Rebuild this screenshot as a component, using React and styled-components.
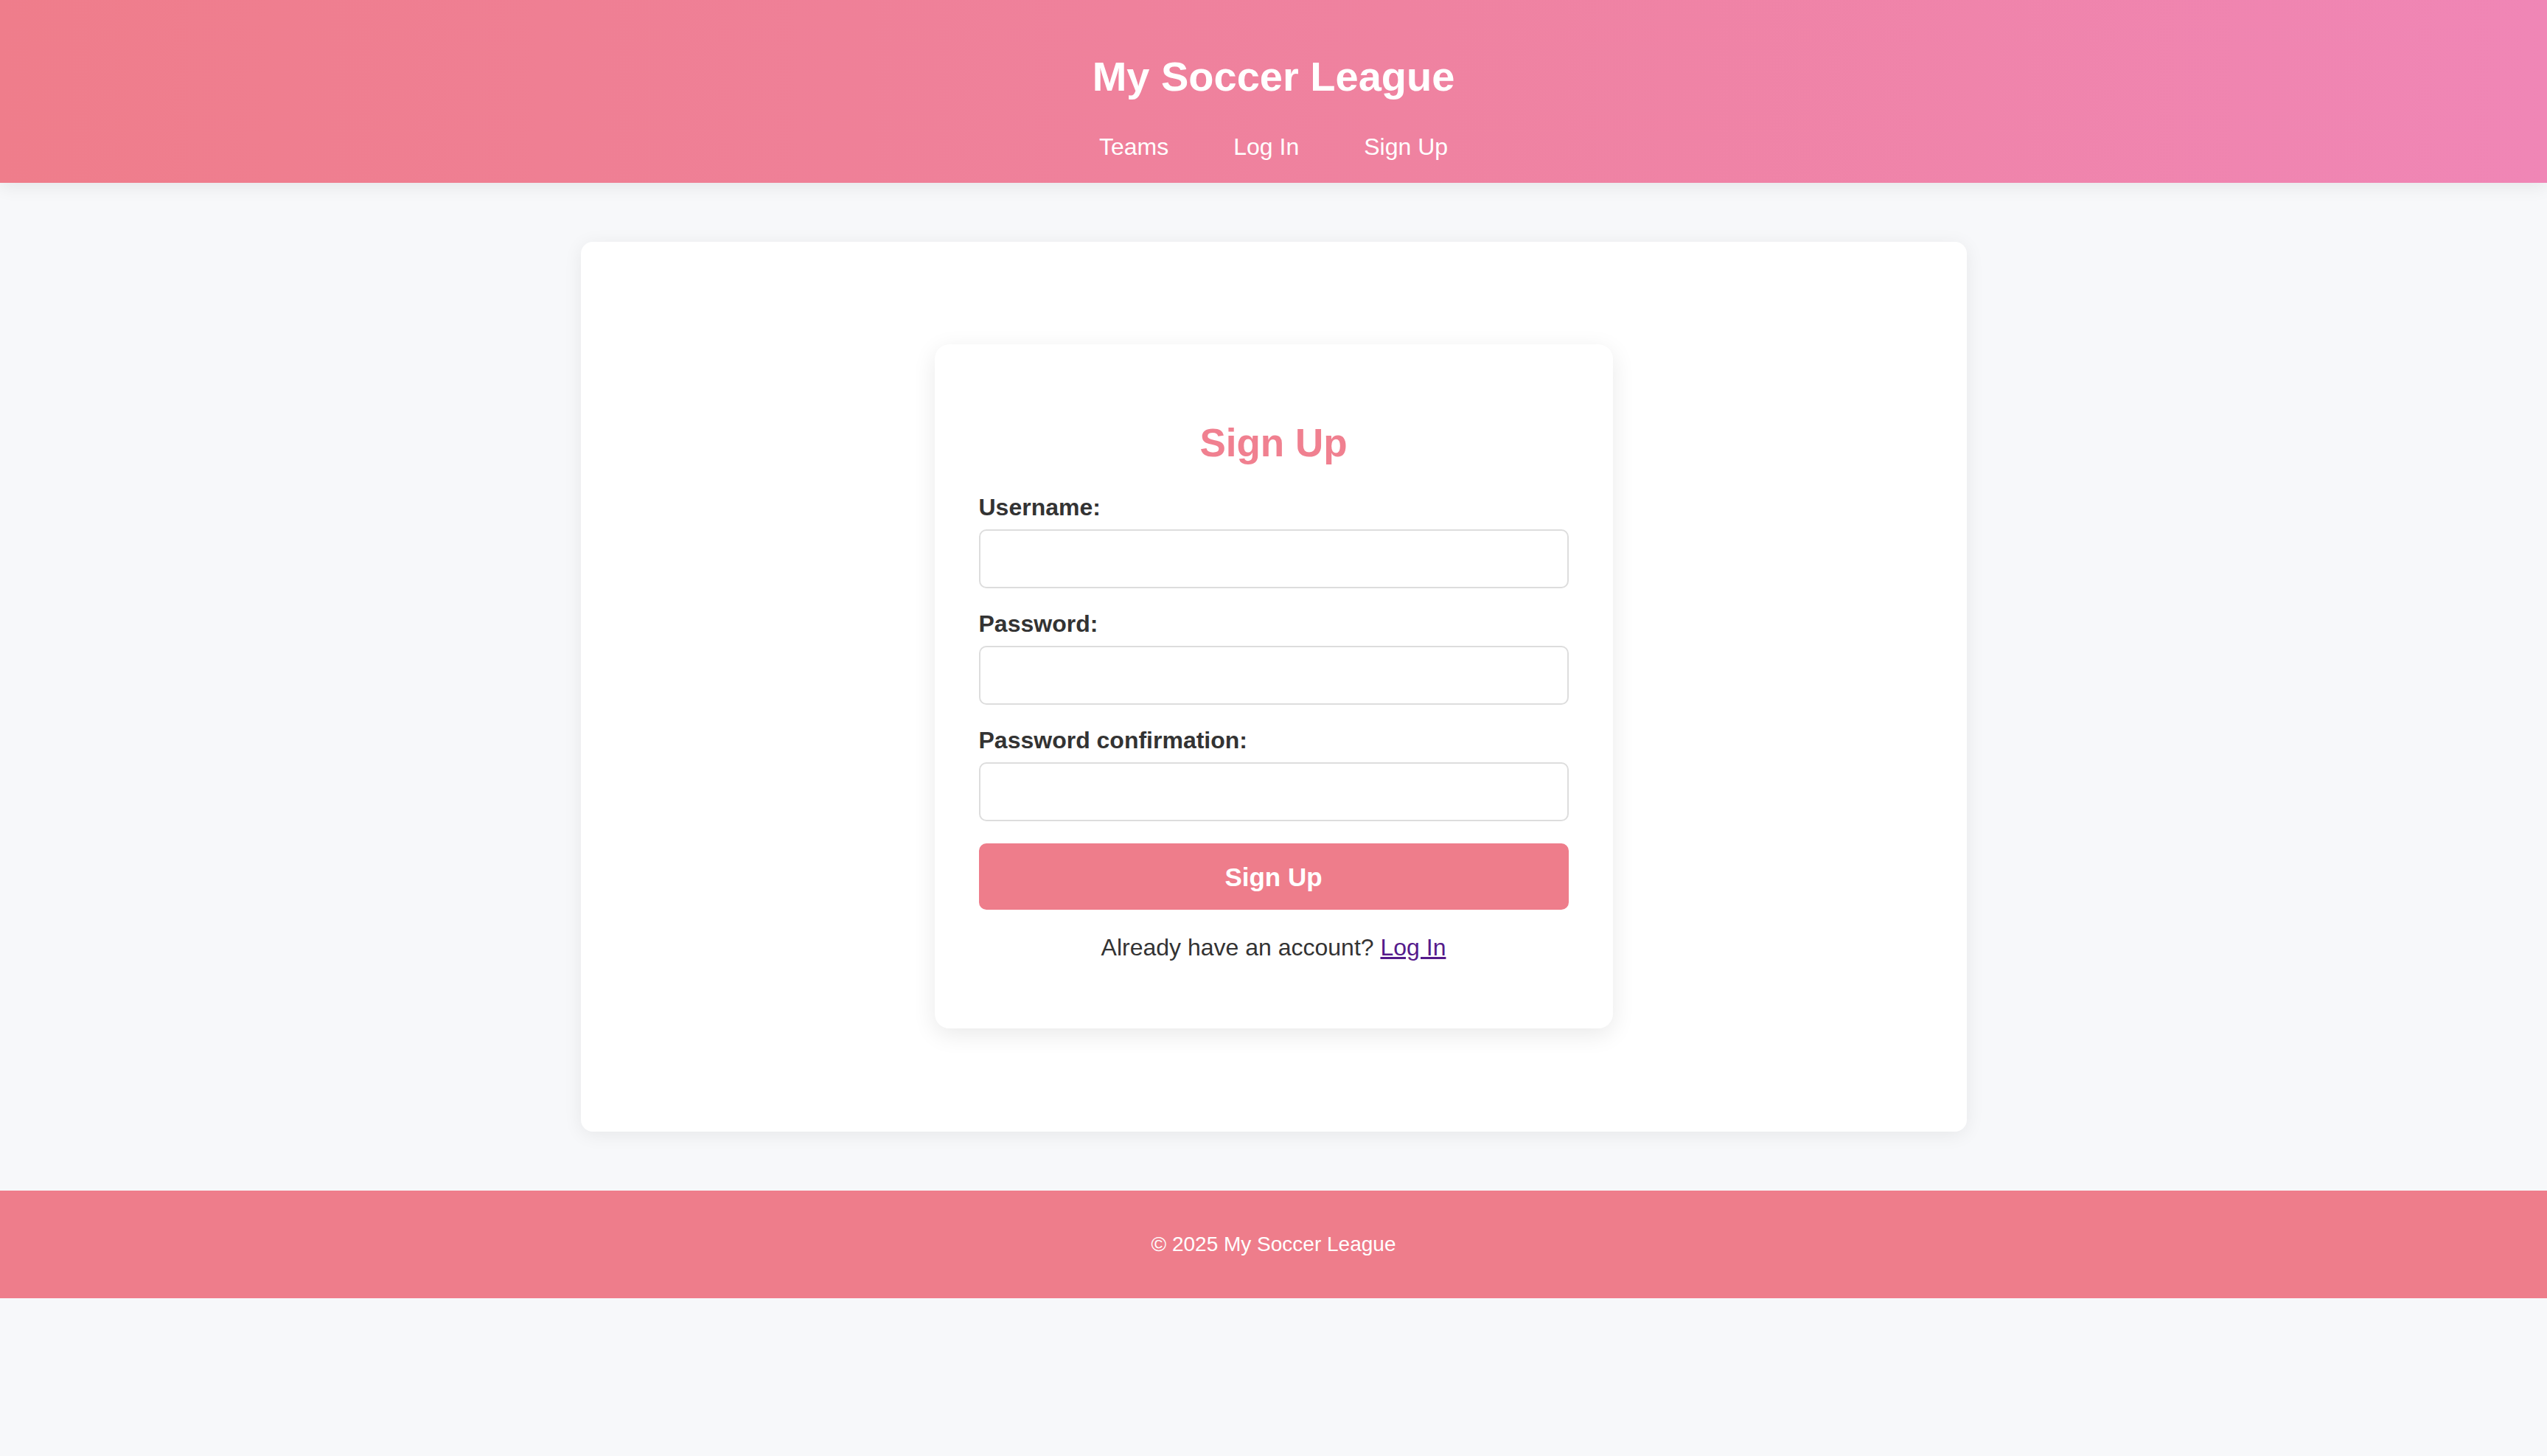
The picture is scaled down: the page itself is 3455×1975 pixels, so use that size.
import React from "react";
import styled, { createGlobalStyle } from "styled-components";

const GlobalStyle = createGlobalStyle`
  html, body {
    margin: 0;
    padding: 0;
    background: #f7f8fa;
    font-family: "Liberation Sans", Arial, Helvetica, sans-serif;
    color: #333333;
  }
  * { box-sizing: border-box; }
`;

const Header = styled.header`
  background: linear-gradient(90deg, #ef7d8b 0%, #ef82a0 55%, #f086b6 100%);
  padding: 72px 20px 31px;
  text-align: center;
  box-shadow: 0 6px 22px rgba(0, 0, 0, 0.07);
  position: relative;
  z-index: 1;
`;

const SiteTitle = styled.h1`
  margin: 0 0 46px;
  font-size: 56px;
  line-height: 63px;
  font-weight: 700;
  color: #ffffff;
`;

const Nav = styled.nav`
  display: flex;
  justify-content: center;
  gap: 88px;
`;

const NavLink = styled.a`
  font-size: 32px;
  line-height: 36px;
  color: #ffffff;
  text-decoration: none;
`;

const Main = styled.main`
  padding: 80px 20px;
`;

const OuterCard = styled.section`
  max-width: 1880px;
  margin: 0 auto;
  background: #ffffff;
  border-radius: 16px;
  box-shadow: 0 4px 26px rgba(0, 0, 0, 0.07);
  padding: 139px 20px 140px;
  display: flex;
  justify-content: center;
`;

const FormCard = styled.div`
  width: 920px;
  background: #ffffff;
  border-radius: 20px;
  box-shadow: 0 8px 32px rgba(0, 0, 0, 0.09);
  padding: 104px 60px 60px;
`;

const FormTitle = styled.h2`
  margin: 0 0 40px;
  text-align: center;
  font-size: 53px;
  line-height: 59px;
  font-weight: 700;
  color: #f08090;
`;

const Field = styled.div`
  margin-bottom: 30px;
`;

const Label = styled.label`
  display: block;
  margin-bottom: 12px;
  font-size: 32px;
  line-height: 36px;
  font-weight: 700;
  color: #333333;
`;

const Input = styled.input`
  display: block;
  width: 100%;
  height: 80px;
  border: 2px solid #dddddd;
  border-radius: 10px;
  padding: 0 20px;
  font-size: 32px;
  font-family: inherit;
  background: #ffffff;
  outline: none;
`;

const SubmitButton = styled.button`
  display: block;
  width: 100%;
  height: 90px;
  border: none;
  border-radius: 10px;
  background: #ee7d8b;
  color: #ffffff;
  font-family: inherit;
  font-size: 35px;
  font-weight: 700;
  line-height: 90px;
  cursor: pointer;
`;

const Hint = styled.p`
  margin: 33px 0 32px;
  text-align: center;
  font-size: 32px;
  line-height: 36px;
  color: #333333;
`;

const HintLink = styled.a`
  color: #551a8b;
  text-decoration: underline;
`;

const Footer = styled.footer`
  background: #ee7d8b;
  padding: 56px 20px;
  text-align: center;
  color: #ffffff;
  font-size: 28px;
  line-height: 34px;
`;

export default function App() {
  return (
    <>
      <GlobalStyle />
      <Header>
        <SiteTitle>My Soccer League</SiteTitle>
        <Nav>
          <NavLink href="#">Teams</NavLink>
          <NavLink href="#">Log In</NavLink>
          <NavLink href="#">Sign Up</NavLink>
        </Nav>
      </Header>
      <Main>
        <OuterCard>
          <FormCard>
            <FormTitle>Sign Up</FormTitle>
            <form onSubmit={(e) => e.preventDefault()}>
              <Field>
                <Label htmlFor="username">Username:</Label>
                <Input id="username" type="text" />
              </Field>
              <Field>
                <Label htmlFor="password">Password:</Label>
                <Input id="password" type="password" />
              </Field>
              <Field>
                <Label htmlFor="password_confirmation">Password confirmation:</Label>
                <Input id="password_confirmation" type="password" />
              </Field>
              <SubmitButton type="submit">Sign Up</SubmitButton>
            </form>
            <Hint>
              Already have an account? <HintLink href="#">Log In</HintLink>
            </Hint>
          </FormCard>
        </OuterCard>
      </Main>
      <Footer>© 2025 My Soccer League</Footer>
    </>
  );
}
